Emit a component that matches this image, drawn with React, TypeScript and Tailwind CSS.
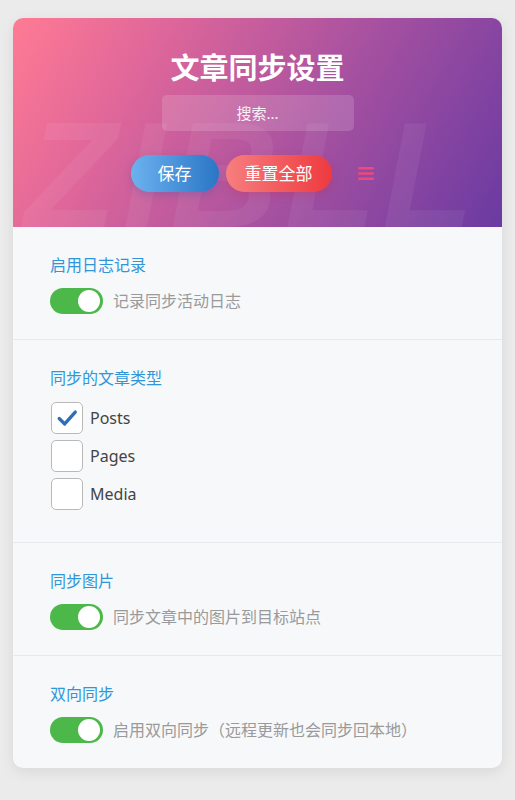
import React, { useState } from "react";

const FONT = { fontFamily: '"Noto Sans", "Noto Sans CJK SC", sans-serif' };

function Toggle({ on, onClick }: { on: boolean; onClick: () => void }) {
  return (
    <button
      onClick={onClick}
      className={`relative h-[26px] w-[53px] shrink-0 rounded-full ${on ? "bg-[#4cb84a]" : "bg-[#cccccc]"}`}
    >
      <span
        className={`absolute top-[2px] h-[22px] w-[22px] rounded-full bg-white ${on ? "left-[28px]" : "left-[3px]"}`}
      />
    </button>
  );
}

function Section({ title, children }: { title: string; children: React.ReactNode }) {
  return (
    <div className="border-b border-[#e6eaee] pl-[37px] pr-[37px] pt-[27px] pb-[25px] last:border-b-0">
      <div className="h-[22px] text-[16px] leading-[22px] text-[#2f97d9]">{title}</div>
      <div className="mt-[12px]">{children}</div>
    </div>
  );
}

function ToggleRow({ label }: { label: string }) {
  const [on, setOn] = useState(true);
  return (
    <div className="flex h-[26px] items-center gap-[10px]">
      <Toggle on={on} onClick={() => setOn(!on)} />
      <span className="text-[16px] text-[#9a9a9a]">{label}</span>
    </div>
  );
}

function CheckRow({ label, initial }: { label: string; initial: boolean }) {
  const [c, setC] = useState(initial);
  return (
    <label className="flex h-[32px] items-center gap-[7px] pl-[1px]" onClick={() => setC(!c)}>
      <span className="flex h-[32px] w-[32px] items-center justify-center rounded-[5px] border border-[#b9b9b9] bg-white">
        {c && (
          <svg width="22" height="22" viewBox="0 0 24 24">
            <path d="M3.5 12.5 L9.5 18.5 L21 5.5" fill="none" stroke="#2a6fb8" strokeWidth="3.6" strokeLinecap="round" strokeLinejoin="round" />
          </svg>
        )}
      </span>
      <span className="text-[16px] text-[#444444]">{label}</span>
    </label>
  );
}

export default function App() {
  return (
    <div className="min-h-[800px] bg-[#ebebeb] px-[13px] pt-[18px] pb-[30px]" style={FONT}>
      <div className="overflow-hidden rounded-[10px] bg-[#f6f8fa] shadow-[0_4px_14px_rgba(0,0,0,0.08)]">
        <div className="relative h-[209px] overflow-hidden bg-[linear-gradient(120deg,#ff7b94_0%,#e0679a_25%,#a751a0_60%,#6a3aa2_100%)]">
          <div
            aria-hidden="true"
            className="pointer-events-none absolute left-[12px] top-[82px] select-none text-[150px] font-bold italic leading-none tracking-[6px] text-white/[0.06]"
            style={{ fontFamily: '"Liberation Sans", sans-serif' }}
          >
            ZIBLL
          </div>
          <div className="relative flex flex-col items-center pt-[30px]">
            <h1 className="text-[29px] font-bold leading-[40px] text-white">文章同步设置</h1>
            <input
              placeholder="搜索..."
              className="mt-[7px] h-[36px] w-[192px] rounded-[5px] bg-white/15 text-center text-[15px] text-white outline-none placeholder:text-white/90"
            />
            <div className="ml-[1px] mt-[24px] flex items-center gap-[7px]">
              <button className="h-[37px] w-[88px] rounded-full bg-[linear-gradient(90deg,#6cb2ef,#2a76c6)] text-[17px] text-white shadow-[0_3px_8px_rgba(40,80,160,0.25)]">
                保存
              </button>
              <button className="h-[37px] w-[106px] rounded-full bg-[linear-gradient(90deg,#f77e7e,#ee3a3f)] text-[17px] text-white shadow-[0_3px_8px_rgba(200,40,60,0.25)]">
                重置全部
              </button>
              <button className="flex h-[37px] w-[47px] items-center justify-center pl-[8px]">
                <svg width="16" height="13" viewBox="0 0 16 13">
                  <rect x="0" y="0" width="16" height="2.6" rx="1" fill="#ea4a7c" />
                  <rect x="0" y="5.2" width="16" height="2.6" rx="1" fill="#ea4a7c" />
                  <rect x="0" y="10.4" width="16" height="2.6" rx="1" fill="#ea4a7c" />
                </svg>
              </button>
            </div>
          </div>
        </div>
        <Section title="启用日志记录">
          <ToggleRow label="记录同步活动日志" />
        </Section>
        <div className="border-b border-[#e6eaee] pl-[37px] pr-[37px] pt-[27px] pb-[32px]">
          <div className="h-[22px] text-[16px] leading-[22px] text-[#2f97d9]">同步的文章类型</div>
          <div className="mt-[13px] flex flex-col gap-[6px]">
            <CheckRow label="Posts" initial={true} />
            <CheckRow label="Pages" initial={false} />
            <CheckRow label="Media" initial={false} />
          </div>
        </div>
        <Section title="同步图片">
          <ToggleRow label="同步文章中的图片到目标站点" />
        </Section>
        <Section title="双向同步">
          <ToggleRow label="启用双向同步（远程更新也会同步回本地）" />
        </Section>
      </div>
    </div>
  );
}
